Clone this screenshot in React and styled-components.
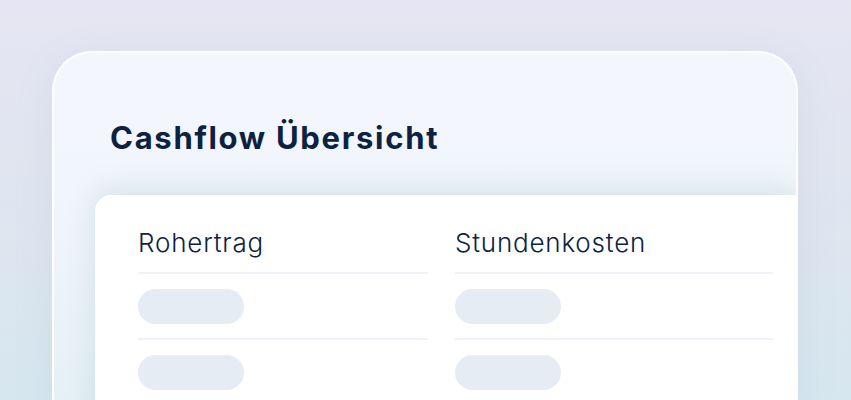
import React from 'react'
import styled, { createGlobalStyle } from 'styled-components'

const Global = createGlobalStyle`
    body {
        margin: 0;
        font-family: "Inter", "Liberation Sans", sans-serif;
    }
`
const Page = styled.div`
    height: 400px;
    overflow: hidden;
    box-sizing: border-box;
    padding: 51px 53px 0 52px;
    background: linear-gradient(180deg, #e6e5f3 0%, #dfe5f0 50%, #d6e7ef 100%);
`
const Card = styled.div`
    height: 360px;
    box-sizing: border-box;
    border: 2px solid #ffffff;
    border-bottom: none;
    border-radius: 40px 40px 0 0;
    background: linear-gradient(180deg, #f4f6fd 0%, #f1f5fc 40%, #e4f0f5 100%);
    box-shadow: 0 10px 40px rgba(120, 140, 180, 0.12);
    overflow: hidden;
`
const Title = styled.h1`
    margin: 0;
    padding: 69px 0 0 56px;
    height: 142px;
    box-sizing: border-box;
    font-size: 31px;
    line-height: 1;
    font-weight: 700;
    letter-spacing: 1.7px;
    color: #0c2240;
`
const Panel = styled.div`
    margin-left: 41px;
    height: 240px;
    background: #ffffff;
    border-radius: 16px 0 0 0;
    box-shadow: 0 -6px 28px rgba(100, 150, 160, 0.2);
    display: grid;
    grid-template-columns: 290px 318px;
    column-gap: 27px;
    padding: 0 0 0 43px;
`
const Column = styled.div`
    display: flex;
    flex-direction: column;
`
const Header = styled.div`
    height: 79px;
    box-sizing: border-box;
    padding-top: 35px;
    font-size: 26px;
    line-height: 1;
    font-weight: 350;
    letter-spacing: 0.8px;
    color: #0c2240;
    border-bottom: 2px solid #eff3f8;
`
const Row = styled.div`
    height: 66px;
    box-sizing: border-box;
    padding-top: 15px;
    border-bottom: 2px solid #eff3f8;
`
const Pill = styled.div`
    width: 106px;
    height: 35px;
    border-radius: 17.5px;
    background: #e5ecf3;
`

const Cell = ({ title }) => (
    <Column>
        <Header>{title}</Header>
        <Row><Pill /></Row>
        <Row><Pill /></Row>
    </Column>
)

export default function App() {
    return (
        <Page>
            <Global />
            <Card>
                <Title>Cashflow Übersicht</Title>
                <Panel>
                    <Cell title="Rohertrag" />
                    <Cell title="Stundenkosten" />
                </Panel>
            </Card>
        </Page>
    )
}
